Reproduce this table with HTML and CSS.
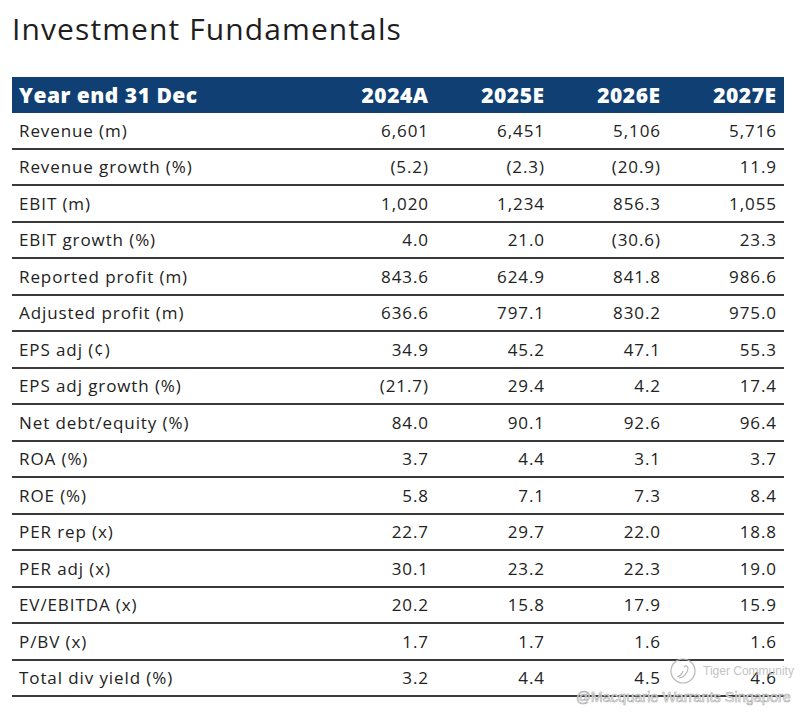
FILE: index.html
```html
<!DOCTYPE html>
<html lang="en">
<head>
<meta charset="utf-8">
<title>Investment Fundamentals</title>
<link rel="stylesheet" href="styles.css">
</head>
<body>
<main class="page">
  <h1 class="title">Investment Fundamentals</h1>
  <div class="table">
    <div class="row head"><div class="label">Year end 31 Dec</div><div>2024A</div><div>2025E</div><div>2026E</div><div>2027E</div></div>
    <div class="row"><div class="label">Revenue (m)</div><div>6,601</div><div>6,451</div><div>5,106</div><div>5,716</div></div>
    <div class="row"><div class="label">Revenue growth (%)</div><div>(5.2)</div><div>(2.3)</div><div>(20.9)</div><div>11.9</div></div>
    <div class="row"><div class="label">EBIT (m)</div><div>1,020</div><div>1,234</div><div>856.3</div><div>1,055</div></div>
    <div class="row"><div class="label">EBIT growth (%)</div><div>4.0</div><div>21.0</div><div>(30.6)</div><div>23.3</div></div>
    <div class="row"><div class="label">Reported profit (m)</div><div>843.6</div><div>624.9</div><div>841.8</div><div>986.6</div></div>
    <div class="row"><div class="label">Adjusted profit (m)</div><div>636.6</div><div>797.1</div><div>830.2</div><div>975.0</div></div>
    <div class="row"><div class="label">EPS adj (¢)</div><div>34.9</div><div>45.2</div><div>47.1</div><div>55.3</div></div>
    <div class="row"><div class="label">EPS adj growth (%)</div><div>(21.7)</div><div>29.4</div><div>4.2</div><div>17.4</div></div>
    <div class="row"><div class="label">Net debt/equity (%)</div><div>84.0</div><div>90.1</div><div>92.6</div><div>96.4</div></div>
    <div class="row"><div class="label">ROA (%)</div><div>3.7</div><div>4.4</div><div>3.1</div><div>3.7</div></div>
    <div class="row"><div class="label">ROE (%)</div><div>5.8</div><div>7.1</div><div>7.3</div><div>8.4</div></div>
    <div class="row"><div class="label">PER rep (x)</div><div>22.7</div><div>29.7</div><div>22.0</div><div>18.8</div></div>
    <div class="row"><div class="label">PER adj (x)</div><div>30.1</div><div>23.2</div><div>22.3</div><div>19.0</div></div>
    <div class="row"><div class="label">EV/EBITDA (x)</div><div>20.2</div><div>15.8</div><div>17.9</div><div>15.9</div></div>
    <div class="row"><div class="label">P/BV (x)</div><div>1.7</div><div>1.7</div><div>1.6</div><div>1.6</div></div>
    <div class="row"><div class="label">Total div yield (%)</div><div>3.2</div><div>4.4</div><div>4.5</div><div>4.6</div></div>
  </div>
  <div class="wm-brand">
    <svg class="wm-logo" width="26" height="26" viewBox="0 0 26 26" fill="none" stroke="#b8b8b8" stroke-width="1.2">
      <circle cx="13" cy="13" r="12"/>
      <path d="M7 19c3-1 5-3 6-6M9 20c4 0 8-4 9-9 0-3-2-4-4-2"/>
    </svg>
    <span>Tiger Community</span>
  </div>
  <div class="wm-text">@Macquarie Warrants Singapore</div>
</main>
</body>
</html>
```
FILE: styles.css
```css
html, body {
  margin: 0;
  padding: 0;
  background: #ffffff;
}
.page {
  position: relative;
  width: 800px;
  height: 717px;
  padding: 12px 16px 0 12px;
  box-sizing: border-box;
  font-family: "Open Sans", "Noto Sans", sans-serif;
  color: #222222;
}
.title {
  margin: 0;
  font-size: 30px;
  font-weight: 400;
  line-height: 34px;
  letter-spacing: 1.1px;
  color: #1e1e1e;
}
.table {
  margin-top: 31px;
  width: 772px;
}
.row {
  display: grid;
  grid-template-columns: 308px 116px 116px 116px 116px;
  height: 36.5px;
  box-sizing: border-box;
  border-bottom: 2px solid #3a3a3a;
  align-items: center;
  font-size: 17px;
  letter-spacing: 0.9px;
}
.row > div {
  text-align: right;
  padding-right: 8px;
}
.row > .label {
  text-align: left;
  padding-left: 7px;
  padding-right: 0;
}
.row > div:not(.label) {
  margin-right: -0.9px;
}
.row.head {
  background: #0f3f73;
  color: #ffffff;
  font-weight: 800;
  font-size: 21px;
  letter-spacing: 0.5px;
  height: 36px;
  border-bottom: none;
}
.row.head > div:not(.label) {
  margin-right: -0.5px;
}
.wm-brand {
  position: absolute;
  left: 670px;
  top: 658px;
  display: flex;
  align-items: center;
  gap: 7px;
  color: #c4c4c4;
  font-size: 12px;
  font-family: "Liberation Sans", sans-serif;
}
.wm-text {
  position: absolute;
  left: 576px;
  top: 689px;
  font-size: 14.5px;
  font-family: "Liberation Sans", sans-serif;
  color: #ffffff;
  -webkit-text-stroke: 0.6px #a8a8a8;
}
```
